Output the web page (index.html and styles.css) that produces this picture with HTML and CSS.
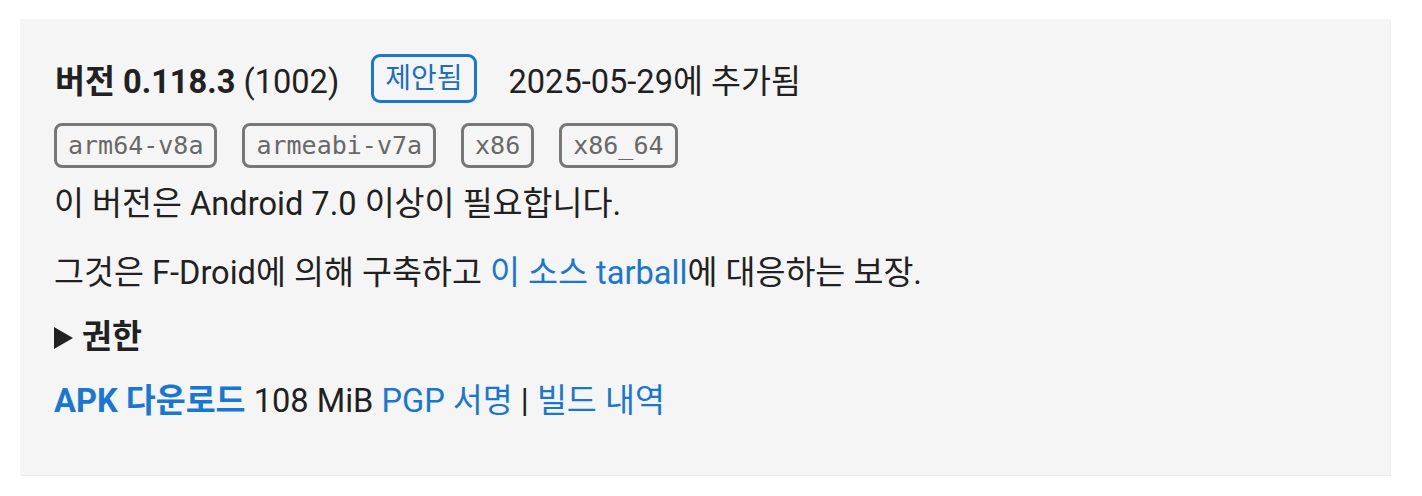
FILE: index.html
```html
<!DOCTYPE html>
<html lang="ko">
<head>
<meta charset="utf-8">
<title>버전 0.118.3</title>
<link rel="stylesheet" href="styles.css">
</head>
<body>
<div class="package-version">
  <div class="version-header">
    <span class="version-title"><b>버전 0.118.3</b> (1002)</span>
    <span class="badge">제안됨</span>
    <span class="version-added">2025-05-29에 추가됨</span>
  </div>
  <div class="abis">
    <code class="abi">arm64-v8a</code>
    <code class="abi">armeabi-v7a</code>
    <code class="abi">x86</code>
    <code class="abi">x86_64</code>
  </div>
  <p class="line">이 버전은 Android 7.0 이상이 필요합니다.</p>
  <p class="line">그것은 F-Droid에 의해 구축하고 <a href="#">이 소스 tarball</a>에 대응하는 보장.</p>
  <details class="permissions">
    <summary><span class="arrow"></span>권한</summary>
  </details>
  <p class="download"><a class="apk" href="#">APK 다운로드</a> 108 MiB <a href="#">PGP 서명</a> | <a href="#">빌드 내역</a></p>
</div>
</body>
</html>
```
FILE: styles.css
```css
html, body {
  margin: 0;
  padding: 0;
  background: #ffffff;
}
body {
  padding: 19px 20px;
  font-family: Roboto, "Noto Sans CJK KR", sans-serif;
  color: #212121;
  font-size: 32.6px;
}
.package-version {
  width: 1370px;
  box-sizing: border-box;
  background: #f5f5f5;
  box-shadow: 1px 1px 0 #ececec;
  padding: 35px 34px 51px;
}
.version-header {
  display: flex;
  align-items: center;
  gap: 32px;
  height: 49px;
}
.version-title {
  margin-left: 1px;
}
.version-title b {
  font-weight: 700;
}
.badge {
  border: 3px solid #1976d2;
  border-radius: 9px;
  color: #1a6fc4;
  font-size: 28px;
  line-height: 37px;
  padding: 3px 11px;
  background: transparent;
}
.abis {
  display: flex;
  gap: 25px;
  margin-top: 20px;
  margin-bottom: 14px;
}
.abi {
  font-family: "DejaVu Sans Mono", monospace;
  font-size: 25px;
  color: #686868;
  border: 3px solid #777777;
  border-radius: 8px;
  padding: 0 11px;
  line-height: 39px;
  background: transparent;
}
.line {
  margin: 0 0 24px;
  line-height: 45px;
}
.line + .line {
  margin-bottom: 19px;
}
a {
  color: #1976d2;
  text-decoration: none;
}
.permissions {
  margin-bottom: 19px;
}
.permissions summary {
  list-style: none;
  font-weight: 700;
  line-height: 45px;
  display: flex;
  align-items: center;
}
.permissions summary::-webkit-details-marker {
  display: none;
}
.arrow {
  width: 0;
  height: 0;
  border-top: 11px solid transparent;
  border-bottom: 11px solid transparent;
  border-left: 19px solid #212121;
  margin-right: 9px;
}
.download {
  margin: 0;
  line-height: 45px;
}
.apk {
  font-weight: 700;
}
```
